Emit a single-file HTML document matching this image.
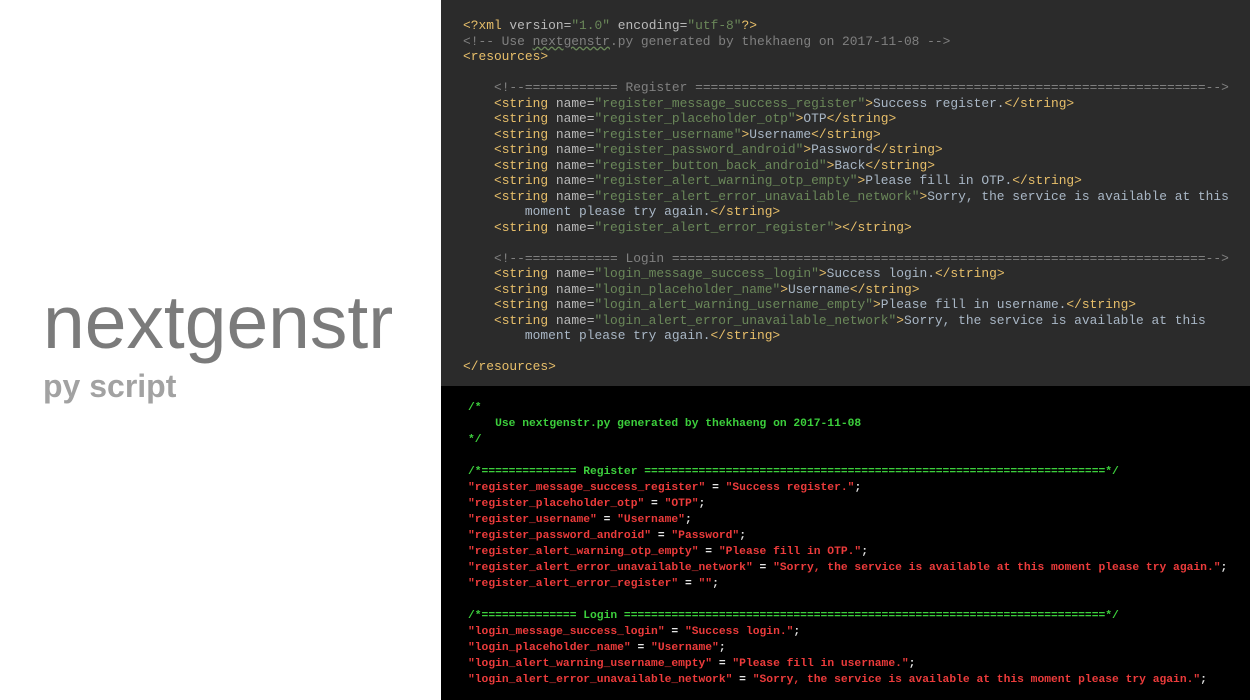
<!DOCTYPE html>
<html><head><meta charset="utf-8"><style>
html,body{margin:0;padding:0;width:1250px;height:700px;overflow:hidden;background:#fff;position:relative}
.logo{position:absolute;left:43px;top:285px;font-family:"Liberation Sans",sans-serif;font-size:75px;color:#7b7b7b;line-height:1}
.sub{position:absolute;left:43px;top:370px;font-family:"Liberation Sans",sans-serif;font-size:32px;font-weight:bold;color:#a2a2a2;line-height:1}
.top{position:absolute;left:441px;top:0;width:809px;height:386px;background:#2b2b2b}
.bot{position:absolute;left:441px;top:386px;width:809px;height:314px;background:#000}
pre{margin:0;position:absolute;font-family:"Liberation Mono",monospace;white-space:pre}
.top pre{left:22px;top:18px;font-size:12.9px;line-height:15.5px;color:#a9b7c6}
.bot pre{left:27px;top:14px;font-size:11.3px;line-height:16px;font-weight:bold;color:#ec3b3b}
.t{color:#e8bf6a}.a{color:#bababa}.v{color:#6a8759}.c{color:#808080}
.g{color:#3ccf3c}.w{color:#e6e6e6}.u{text-decoration:underline wavy #6a8759}
</style></head><body>
<div class="logo">nextgenstr</div>
<div class="sub">py script</div>
<div class="top"><pre><span class="t">&lt;?xml </span><span class="a">version=</span><span class="v">"1.0"</span> <span class="a">encoding=</span><span class="v">"utf-8"</span><span class="t">?&gt;</span>
<span class="c">&lt;!-- Use <span class="u">nextgenstr</span>.py generated by thekhaeng on 2017-11-08 --&gt;</span>
<span class="t">&lt;resources&gt;</span>

    <span class="c">&lt;!--============ Register ==================================================================--&gt;</span>
    <span class="t">&lt;string </span><span class="a">name=</span><span class="v">"register_message_success_register"</span><span class="t">&gt;</span>Success register.<span class="t">&lt;/string&gt;</span>
    <span class="t">&lt;string </span><span class="a">name=</span><span class="v">"register_placeholder_otp"</span><span class="t">&gt;</span>OTP<span class="t">&lt;/string&gt;</span>
    <span class="t">&lt;string </span><span class="a">name=</span><span class="v">"register_username"</span><span class="t">&gt;</span>Username<span class="t">&lt;/string&gt;</span>
    <span class="t">&lt;string </span><span class="a">name=</span><span class="v">"register_password_android"</span><span class="t">&gt;</span>Password<span class="t">&lt;/string&gt;</span>
    <span class="t">&lt;string </span><span class="a">name=</span><span class="v">"register_button_back_android"</span><span class="t">&gt;</span>Back<span class="t">&lt;/string&gt;</span>
    <span class="t">&lt;string </span><span class="a">name=</span><span class="v">"register_alert_warning_otp_empty"</span><span class="t">&gt;</span>Please fill in OTP.<span class="t">&lt;/string&gt;</span>
    <span class="t">&lt;string </span><span class="a">name=</span><span class="v">"register_alert_error_unavailable_network"</span><span class="t">&gt;</span>Sorry, the service is available at this
        moment please try again.<span class="t">&lt;/string&gt;</span>
    <span class="t">&lt;string </span><span class="a">name=</span><span class="v">"register_alert_error_register"</span><span class="t">&gt;&lt;/string&gt;</span>

    <span class="c">&lt;!--============ Login =====================================================================--&gt;</span>
    <span class="t">&lt;string </span><span class="a">name=</span><span class="v">"login_message_success_login"</span><span class="t">&gt;</span>Success login.<span class="t">&lt;/string&gt;</span>
    <span class="t">&lt;string </span><span class="a">name=</span><span class="v">"login_placeholder_name"</span><span class="t">&gt;</span>Username<span class="t">&lt;/string&gt;</span>
    <span class="t">&lt;string </span><span class="a">name=</span><span class="v">"login_alert_warning_username_empty"</span><span class="t">&gt;</span>Please fill in username.<span class="t">&lt;/string&gt;</span>
    <span class="t">&lt;string </span><span class="a">name=</span><span class="v">"login_alert_error_unavailable_network"</span><span class="t">&gt;</span>Sorry, the service is available at this
        moment please try again.<span class="t">&lt;/string&gt;</span>

<span class="t">&lt;/resources&gt;</span></pre></div>
<div class="bot"><pre><span class="g">/*
    Use nextgenstr.py generated by thekhaeng on 2017-11-08
*/

/*============== Register ====================================================================*/</span>
"register_message_success_register" <span class="w">=</span> "Success register."<span class="w">;</span>
"register_placeholder_otp" <span class="w">=</span> "OTP"<span class="w">;</span>
"register_username" <span class="w">=</span> "Username"<span class="w">;</span>
"register_password_android" <span class="w">=</span> "Password"<span class="w">;</span>
"register_alert_warning_otp_empty" <span class="w">=</span> "Please fill in OTP."<span class="w">;</span>
"register_alert_error_unavailable_network" <span class="w">=</span> "Sorry, the service is available at this moment please try again."<span class="w">;</span>
"register_alert_error_register" <span class="w">=</span> ""<span class="w">;</span>

<span class="g">/*============== Login =======================================================================*/</span>
"login_message_success_login" <span class="w">=</span> "Success login."<span class="w">;</span>
"login_placeholder_name" <span class="w">=</span> "Username"<span class="w">;</span>
"login_alert_warning_username_empty" <span class="w">=</span> "Please fill in username."<span class="w">;</span>
"login_alert_error_unavailable_network" <span class="w">=</span> "Sorry, the service is available at this moment please try again."<span class="w">;</span></pre></div>
</body></html>
